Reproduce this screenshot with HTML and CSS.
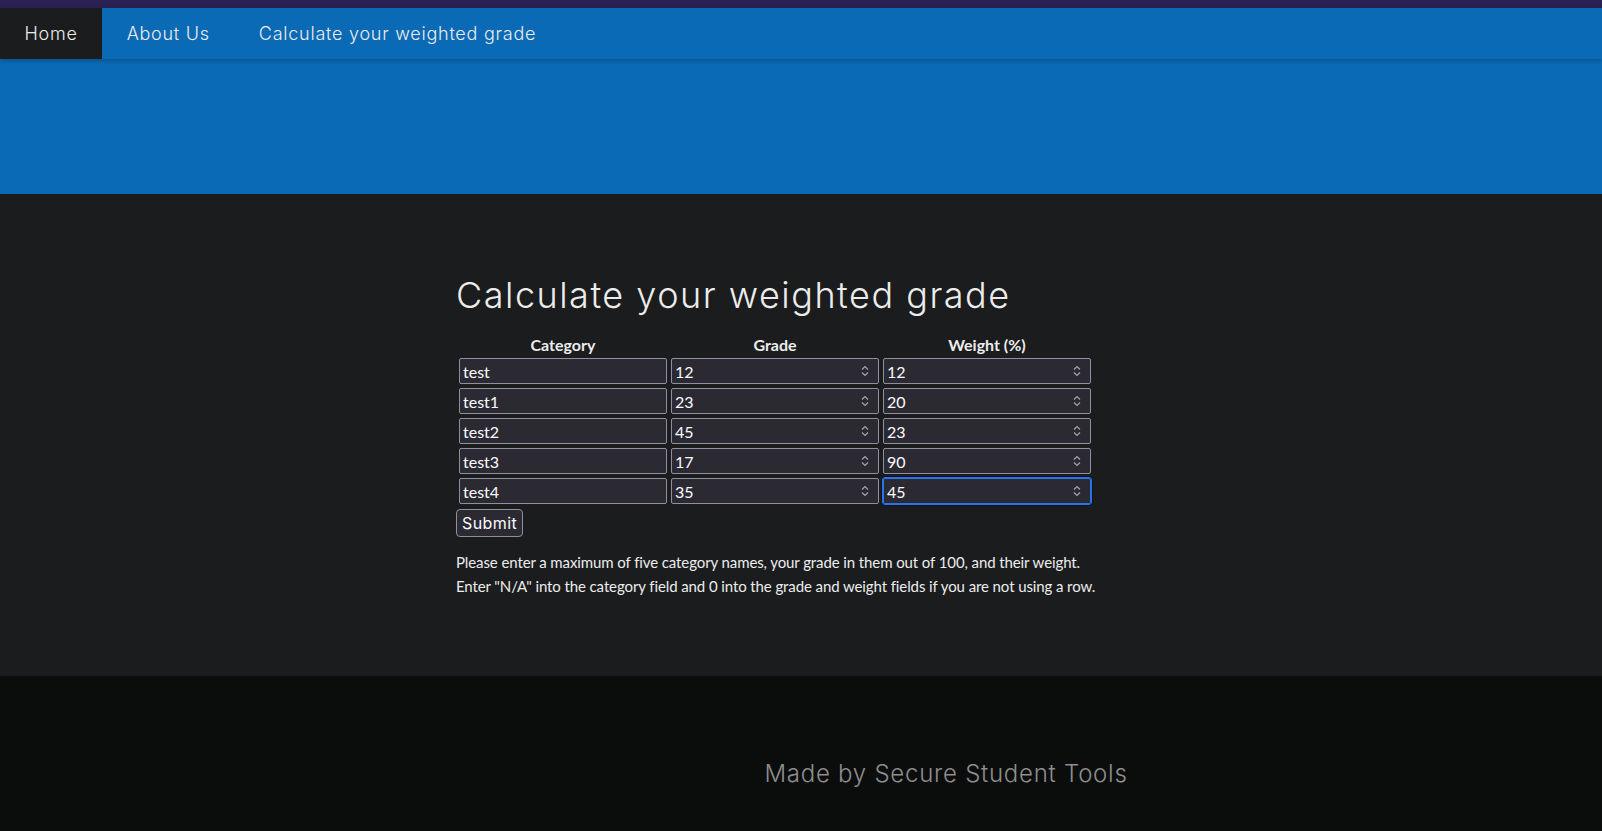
FILE: index.html
```html
<!DOCTYPE html>
<html lang="en">
<head>
<meta charset="utf-8">
<title>Calculate your weighted grade</title>
<link rel="stylesheet" href="styles.css">
</head>
<body>
<div class="topstrip"></div>
<nav class="navbar">
  <a class="nav-link active" href="#">Home</a>
  <a class="nav-link" href="#">About Us</a>
  <a class="nav-link" href="#">Calculate your weighted grade</a>
</nav>
<header class="hero"></header>
<main class="content">
  <div class="container">
    <h1 class="title">Calculate your weighted grade</h1>
    <form class="grade-form">
      <table class="grade-table">
        <thead>
          <tr><th>Category</th><th>Grade</th><th>Weight (%)</th></tr>
        </thead>
        <tbody>
          <tr>
            <td><input class="field" type="text" value="test"></td>
            <td><span class="num"><input class="field" type="text" value="12"><svg class="spin" viewBox="0 0 8 12" width="8" height="12"><path d="M1 4.5 L4 1.5 L7 4.5 M1 7.5 L4 10.5 L7 7.5"/></svg></span></td>
            <td><span class="num"><input class="field" type="text" value="12"><svg class="spin" viewBox="0 0 8 12" width="8" height="12"><path d="M1 4.5 L4 1.5 L7 4.5 M1 7.5 L4 10.5 L7 7.5"/></svg></span></td>
          </tr>
          <tr>
            <td><input class="field" type="text" value="test1"></td>
            <td><span class="num"><input class="field" type="text" value="23"><svg class="spin" viewBox="0 0 8 12" width="8" height="12"><path d="M1 4.5 L4 1.5 L7 4.5 M1 7.5 L4 10.5 L7 7.5"/></svg></span></td>
            <td><span class="num"><input class="field" type="text" value="20"><svg class="spin" viewBox="0 0 8 12" width="8" height="12"><path d="M1 4.5 L4 1.5 L7 4.5 M1 7.5 L4 10.5 L7 7.5"/></svg></span></td>
          </tr>
          <tr>
            <td><input class="field" type="text" value="test2"></td>
            <td><span class="num"><input class="field" type="text" value="45"><svg class="spin" viewBox="0 0 8 12" width="8" height="12"><path d="M1 4.5 L4 1.5 L7 4.5 M1 7.5 L4 10.5 L7 7.5"/></svg></span></td>
            <td><span class="num"><input class="field" type="text" value="23"><svg class="spin" viewBox="0 0 8 12" width="8" height="12"><path d="M1 4.5 L4 1.5 L7 4.5 M1 7.5 L4 10.5 L7 7.5"/></svg></span></td>
          </tr>
          <tr>
            <td><input class="field" type="text" value="test3"></td>
            <td><span class="num"><input class="field" type="text" value="17"><svg class="spin" viewBox="0 0 8 12" width="8" height="12"><path d="M1 4.5 L4 1.5 L7 4.5 M1 7.5 L4 10.5 L7 7.5"/></svg></span></td>
            <td><span class="num"><input class="field" type="text" value="90"><svg class="spin" viewBox="0 0 8 12" width="8" height="12"><path d="M1 4.5 L4 1.5 L7 4.5 M1 7.5 L4 10.5 L7 7.5"/></svg></span></td>
          </tr>
          <tr>
            <td><input class="field" type="text" value="test4"></td>
            <td><span class="num"><input class="field" type="text" value="35"><svg class="spin" viewBox="0 0 8 12" width="8" height="12"><path d="M1 4.5 L4 1.5 L7 4.5 M1 7.5 L4 10.5 L7 7.5"/></svg></span></td>
            <td><span class="num"><input class="field focused" type="text" value="45"><svg class="spin" viewBox="0 0 8 12" width="8" height="12"><path d="M1 4.5 L4 1.5 L7 4.5 M1 7.5 L4 10.5 L7 7.5"/></svg></span></td>
          </tr>
        </tbody>
      </table>
      <button class="submit" type="button">Submit</button>
    </form>
    <p class="note">Please enter a maximum of five category names, your grade in them out of 100, and their weight.<br>Enter "N/A" into the category field and 0 into the grade and weight fields if you are not using a row.</p>
  </div>
</main>
<footer class="footer">
  <p class="footer-text">Made by Secure Student Tools</p>
</footer>
</body>
</html>
```

FILE: styles.css
```css
* { box-sizing: border-box; }

html, body {
  margin: 0;
  padding: 0;
}

body {
  background: #1b1c1e;
  color: #ececec;
  font-family: "Lato", "Liberation Sans", sans-serif;
  font-size: 16px;
  overflow: hidden;
}

.topstrip {
  height: 8px;
  background: #2b2052;
}

.navbar {
  position: relative;
  z-index: 2;
  display: flex;
  height: 51px;
  background: #0b6ab6;
  box-shadow: 0 2px 4px rgba(0, 0, 0, 0.22);
}

.nav-link {
  display: flex;
  align-items: center;
  padding: 0 24.5px;
  color: #ececec;
  text-decoration: none;
  font-family: "Inter", "Noto Sans", sans-serif;
  font-weight: 300;
  font-size: 18px;
  letter-spacing: 0.75px;
}

.nav-link.active {
  background: #1b1c1e;
}

.hero {
  height: 135px;
  background: #0b6ab6;
}

.content {
  background: #1b1c1e;
  height: 482px;
  padding-top: 80px;
}

.container {
  width: 690px;
  margin: 0 auto;
}

.title {
  margin: 0 0 15px;
  font-family: "Inter", "Noto Sans", sans-serif;
  font-weight: 300;
  font-size: 36px;
  line-height: 1.2;
  color: #ececec;
  letter-spacing: 1.5px;
}

.grade-form {
  margin: 0;
}

.grade-table {
  border-spacing: 2px;
  margin: 0;
}

.grade-table th {
  padding: 1px;
  font-weight: 700;
  font-size: 16px;
  line-height: 19px;
  text-align: center;
  color: #ececec;
}

.grade-table td {
  padding: 1px;
}

.num {
  position: relative;
  display: block;
}

.field {
  display: block;
  width: 208px;
  height: 26px;
  margin: 0;
  padding: 1px 3px;
  background: #2b2a33;
  border: 1px solid #8f8f9d;
  border-radius: 2px;
  color: #fbfbfe;
  font-family: "Lato", "Liberation Sans", sans-serif;
  font-size: 16px;
  outline: none;
}

.field.focused {
  border-color: #2a74e8;
  outline: 1px solid #2a74e8;
  box-shadow: 0 0 0 2px rgba(10, 20, 40, 0.9);
}

.spin {
  position: absolute;
  right: 10px;
  top: 7px;
  fill: none;
  stroke: #a3a3ad;
  stroke-width: 1.2;
}

.submit {
  display: block;
  height: 28px;
  margin: 2px 0 0;
  padding: 0 5px;
  background: #2b2a33;
  border: 1px solid #8f8f9d;
  border-radius: 4px;
  color: #fbfbfe;
  font-family: "Inter", "Noto Sans", sans-serif;
  font-weight: 400;
  font-size: 16px;
  letter-spacing: 0.4px;
}

.note {
  margin: 14px 0 0;
  font-size: 15px;
  line-height: 23.5px;
  letter-spacing: -0.1px;
  color: #ececec;
}

.footer {
  height: 156px;
  background: #0b0d0d;
  padding-top: 83px;
  padding-left: 290px;
}

.footer-text {
  margin: 0;
  text-align: center;
  font-family: "Inter", "Noto Sans", sans-serif;
  font-weight: 300;
  font-size: 24px;
  line-height: 29px;
  letter-spacing: 0.75px;
  color: #8e8e8e;
}
```
